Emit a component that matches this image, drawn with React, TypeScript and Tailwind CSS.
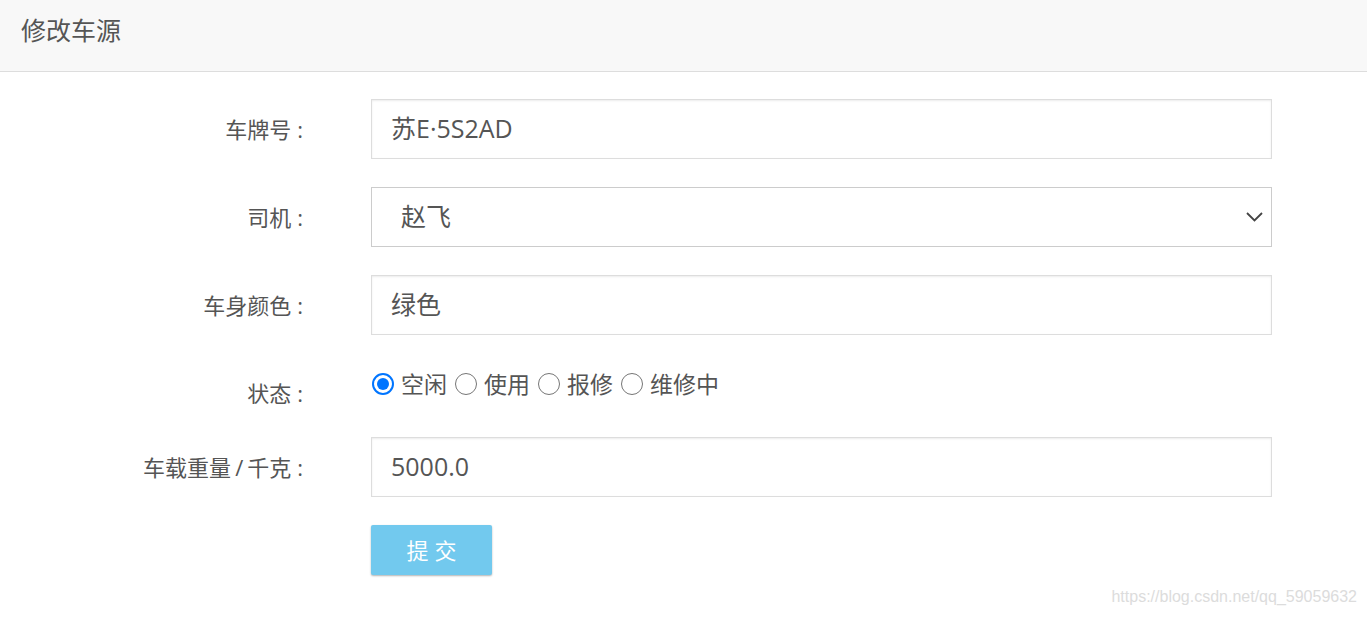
import type { ReactNode } from "react";

const FONT = "font-['Open_Sans','Noto_Sans_CJK_SC',sans-serif]";

function Label({ children }: { children: ReactNode }) {
	return (
		<div className="w-[303px] shrink-0 text-right text-[22px] text-[#555] leading-[60px] whitespace-nowrap">
			{children}
			<span className="ml-[6px]">:</span>
		</div>
	);
}

function TextInput({ value }: { value: string }) {
	return (
		<div className="ml-[68px] w-[901px] h-[60px] border border-[#ddd] shadow-[inset_0_1px_2px_rgba(0,0,0,0.08)] pl-[19px] flex items-center text-[25px] text-[#555]">
			{value}
		</div>
	);
}

function Radio({ checked, label }: { checked?: boolean; label: string }) {
	return (
		<div className="flex items-center">
			{checked ? (
				<span className="w-[22px] h-[22px] rounded-full border-[2px] border-[#0075ff] flex items-center justify-center">
					<span className="w-[12px] h-[12px] rounded-full bg-[#0075ff]" />
				</span>
			) : (
				<span className="w-[22px] h-[22px] rounded-full border border-[#767676]" />
			)}
			<span className="ml-[7px] mr-[8px] text-[23px] text-[#555]">{label}</span>
		</div>
	);
}

export default function App() {
	return (
		<div className={`${FONT} relative w-[1367px] h-[617px] bg-white overflow-hidden`}>
			<div className="h-[72px] bg-[#f8f8f8] border-b border-[#ddd] flex items-center pl-[21px] pb-[10px]">
				<h1 className="text-[25px] text-[#555]">修改车源</h1>
			</div>

			<div className="pt-[27px] flex flex-col gap-[28px]">
				<div className="flex">
					<Label>车牌号</Label>
					<TextInput value="苏E·5S2AD" />
				</div>

				<div className="flex">
					<Label>司机</Label>
					<div className="ml-[68px] w-[901px] h-[60px] border border-[#ccc] pl-[29px] pr-[8px] flex items-center justify-between text-[25px] text-[#555]">
						<span>赵飞</span>
						<svg className="w-[17px] h-[10px]" viewBox="0 0 17 10" fill="none">
							<polyline points="1,1 8.5,8.5 16,1" stroke="#444" strokeWidth="1.8" />
						</svg>
					</div>
				</div>

				<div className="flex">
					<Label>车身颜色</Label>
					<TextInput value="绿色" />
				</div>

				<div className="flex h-[46px]">
					<Label>状态</Label>
					<div className="ml-[69px] pt-[4px] flex items-start h-fit">
						<Radio checked label="空闲" />
						<Radio label="使用" />
						<Radio label="报修" />
						<Radio label="维修中" />
					</div>
				</div>

				<div className="flex">
					<Label>
						车载重量<span className="mx-[4px]">/</span>千克
					</Label>
					<TextInput value="5000.0" />
				</div>

				<div className="flex">
					<div className="w-[303px] shrink-0" />
					<button className="ml-[68px] w-[121px] h-[50px] bg-[#72c9ee] rounded-[2px] shadow-[0_1px_2px_rgba(0,0,0,0.3)] text-white text-[22px] tracking-[6px] pl-[6px]">
						提交
					</button>
				</div>
			</div>

			<div className="absolute right-[10px] bottom-[8px] font-['Liberation_Sans',sans-serif] text-[16px] text-[#dcdcdc]">
				https://blog.csdn.net/qq_59059632
			</div>
		</div>
	);
}
